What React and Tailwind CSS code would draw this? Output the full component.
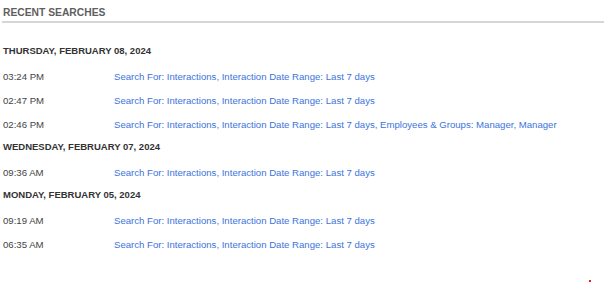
export default function App() {
  const groups = [
    {
      date: "THURSDAY, FEBRUARY 08, 2024",
      rows: [
        ["03:24 PM", "Search For: Interactions, Interaction Date Range: Last 7 days"],
        ["02:47 PM", "Search For: Interactions, Interaction Date Range: Last 7 days"],
        ["02:46 PM", "Search For: Interactions, Interaction Date Range: Last 7 days, Employees & Groups: Manager, Manager"],
      ],
    },
    {
      date: "WEDNESDAY, FEBRUARY 07, 2024",
      rows: [["09:36 AM", "Search For: Interactions, Interaction Date Range: Last 7 days"]],
    },
    {
      date: "MONDAY, FEBRUARY 05, 2024",
      rows: [
        ["09:19 AM", "Search For: Interactions, Interaction Date Range: Last 7 days"],
        ["06:35 AM", "Search For: Interactions, Interaction Date Range: Last 7 days"],
      ],
    },
  ];
  return (
    <div className="relative w-[604px] h-[285px] bg-white overflow-hidden" style={{ fontFamily: '"Liberation Sans", Arial, sans-serif' }}>
      <div className="pl-[2px] pt-[6px]">
        <div className="pl-[1px] text-[10.3px] font-bold text-[#5f5f5f] leading-[14px] h-[15px] whitespace-nowrap">RECENT SEARCHES</div>
        <div className="h-[2px] bg-[#d6d6d6]"></div>
      </div>
      <div className="pl-[3px] pt-[21px]">
        {groups.map((g) => (
          <div key={g.date} className="mb-[-2px]">
            <div className="text-[9.5px] font-bold text-[#333] leading-[14px] h-[14px] mb-[12px] whitespace-nowrap">{g.date}</div>
            {g.rows.map((r, i) => (
              <div key={i} className="flex text-[9.6px] leading-[14px] h-[14px] mb-[10px] whitespace-nowrap">
                <div className="w-[111px] shrink-0 text-[#444]">{r[0]}</div>
                <div className="text-[#3c74dc]">{r[1]}</div>
              </div>
            ))}
          </div>
        ))}
      </div>
      <div className="absolute left-[589px] top-[280px] w-[2px] h-[2px] bg-[#e02020]"></div>
    </div>
  );
}
